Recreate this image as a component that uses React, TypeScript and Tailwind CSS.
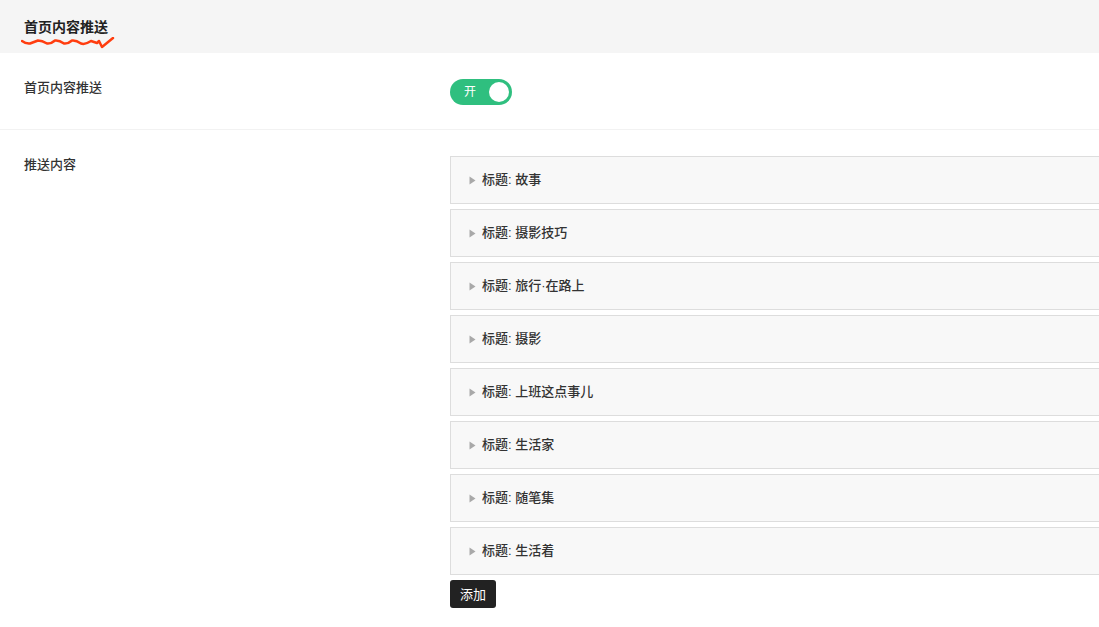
import React, { useState } from 'react';

const items = ['故事', '摄影技巧', '旅行·在路上', '摄影', '上班这点事儿', '生活家', '随笔集', '生活着'];

const Squiggle: React.FC = () => (
  <svg className="absolute left-[-3px] top-[22px]" width="96" height="14" viewBox="0 0 96 14">
    <path
      d="M1 4 Q5 7 9 6.5 Q13 5 17 3.5 Q21 3.5 26 6.5 Q30 7 34 3.5 Q38 3 43 6.5 Q47 7 51 3.5 Q55 3 60 6.5 Q64 8 70 4 L76 6 L78 4 L81 10 L92 1"
      fill="none"
      stroke="#ff3d0f"
      strokeWidth="2.5"
      strokeLinecap="round"
      strokeLinejoin="round"
    />
  </svg>
);

const App: React.FC = () => {
  const [enabled, setEnabled] = useState(true);

  return (
    <div className="min-h-[627px] bg-white text-[#333] font-['Liberation_Sans','Noto_Sans_CJK_SC',sans-serif] overflow-hidden">
      {/* header */}
      <div className="h-[53px] bg-[#f5f5f5] px-6 flex items-center">
        <div className="relative">
          <span className="text-[14px] font-semibold text-[#222] leading-none">首页内容推送</span>
          <Squiggle />
        </div>
      </div>

      {/* switch row */}
      <div className="flex h-[77px] border-b border-[#f2f2f2]">
        <div className="w-[450px] pl-6 pt-[26px] text-[13px] font-medium leading-[18px]">首页内容推送</div>
        <div className="pt-[26px]">
          <button
            onClick={() => setEnabled(!enabled)}
            className="w-[62px] h-[26px] rounded-full bg-[#2fbf7f] flex items-center justify-between pl-[14px] pr-[3px]"
          >
            <span className="text-[12px] text-white leading-none">开</span>
            <span className="w-[20px] h-[20px] rounded-full bg-white" />
          </button>
        </div>
      </div>

      {/* list row */}
      <div className="flex">
        <div className="w-[450px] shrink-0 pl-6 pt-[26px] text-[13px] font-medium leading-[18px]">推送内容</div>
        <div className="pt-[26px] flex-1 min-w-0">
          <div className="w-[700px] flex flex-col gap-[5px]">
            {items.map((t) => (
              <div
                key={t}
                className="h-[48px] border border-[#dddddd] bg-[#f8f8f8] flex items-center pl-[18px] gap-[6px] text-[13px] text-[#333]"
              >
                <svg width="7" height="9" viewBox="0 0 7 9">
                  <path d="M0.5 0.5 L6.5 4.5 L0.5 8.5 Z" fill="#a9a9a9" />
                </svg>
                <span className="font-medium">标题: {t}</span>
              </div>
            ))}
          </div>
          <button className="mt-[5px] h-[28px] px-[10px] rounded-[3px] bg-[#222] text-white text-[13px] leading-none">
            添加
          </button>
        </div>
      </div>
    </div>
  );
};

export default App;
